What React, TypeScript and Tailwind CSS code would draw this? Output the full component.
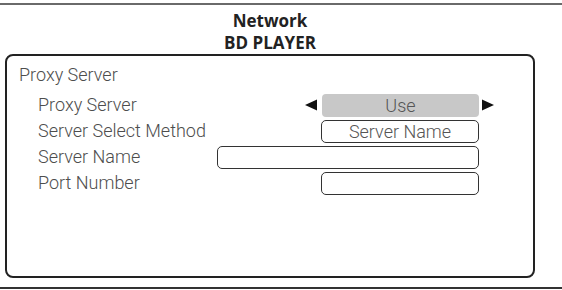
import React from "react";

const body = { fontFamily: "Roboto, 'Liberation Sans', sans-serif" };

function Left() {
  return (
    <svg width="12" height="12" viewBox="0 0 12 12" className="shrink-0">
      <polygon points="0,6 12,0.5 12,11.5" fill="#111" />
    </svg>
  );
}
function Right() {
  return (
    <svg width="12" height="12" viewBox="0 0 12 12" className="shrink-0">
      <polygon points="12,6 0,0.5 0,11.5" fill="#111" />
    </svg>
  );
}

function Row({ label, children, right }: { label: string; children?: React.ReactNode; right?: React.ReactNode }) {
  return (
    <div className="flex h-[26px] items-center pl-[31px]">
      <div className="w-[179px] shrink-0 text-[18px] font-light leading-[26px] text-[#4d4d4d]">{label}</div>
      <div className="flex w-[262px] shrink-0 items-center justify-end">{children}</div>
      <div className="ml-[3px] flex items-center">{right}</div>
    </div>
  );
}

export default function App() {
  return (
    <div className="relative h-[290px] w-[562px] overflow-hidden bg-white" style={body}>
      <div className="mt-[3px] h-[2px] w-full bg-[#6a6a6a]" />
      <div
        className="w-[540px] pt-[5px] text-center text-[17px] font-bold leading-[22px] text-[#222]"
        style={{ fontFamily: "'Open Sans', 'Noto Sans', sans-serif" }}
      >
        <div>Network</div>
        <div>BD PLAYER</div>
      </div>
      <div className="ml-[5px] h-[224px] w-[530px] rounded-[8px] border-2 border-[#222]">
        <div className="mt-[5px] flex h-[26px] items-center pl-[12px] text-[18px] font-light text-[#4d4d4d]">
          Proxy Server
        </div>
        <div className="mt-[5px] flex flex-col">
          <Row label="Proxy Server" right={<Right />}>
            <Left />
            <div className="ml-[5px] flex h-[23px] w-[157px] items-center justify-center rounded-[4px] bg-[#c8c8c8] text-[18px] font-light text-[#555]">
              Use
            </div>
          </Row>
          <Row label="Server Select Method">
            <div className="flex h-[23px] w-[158px] items-center justify-center rounded-[5px] border border-[#333] text-[18px] font-light text-[#555]">
              Server Name
            </div>
          </Row>
          <Row label="Server Name">
            <div className="h-[23px] w-[262px] rounded-[5px] border border-[#333]" />
          </Row>
          <Row label="Port Number">
            <div className="h-[23px] w-[158px] rounded-[5px] border border-[#333]" />
          </Row>
        </div>
      </div>
      <div className="mt-[9px] h-[2px] w-full bg-[#333]" />
    </div>
  );
}
